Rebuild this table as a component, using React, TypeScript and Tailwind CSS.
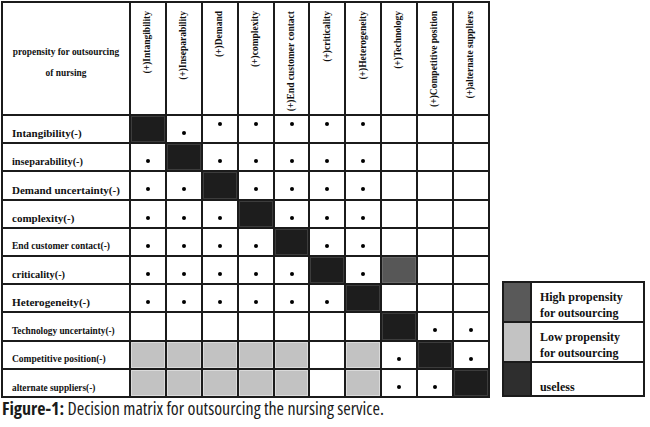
import React from 'react';

type Cell = 'black' | 'high' | 'low' | 'dot' | 'dotHigh' | '';

const columns = [
    '(+)Intangibility',
    '(+)Inseparability',
    '(+)Demand',
    '(+)complexity',
    '(+)End customer contact',
    '(+)criticality',
    '(+)Heterogeneity',
    '(+)Technology',
    '(+)Competitive position',
    '(+)alternate suppliers',
];

// label, label size, cells
const rows: { label: string; size: string; cells: Cell[] }[] = [
    { label: 'Intangibility(-)', size: 'text-[11px]', cells: ['black', 'dot', 'dotHigh', 'dotHigh', 'dotHigh', 'dotHigh', 'dotHigh', '', '', ''] },
    { label: 'inseparability(-)', size: 'text-[10.3px]', cells: ['dot', 'black', 'dot', 'dot', 'dot', 'dot', 'dot', '', '', ''] },
    { label: 'Demand uncertainty(-)', size: 'text-[11px]', cells: ['dot', 'dot', 'black', 'dot', 'dot', 'dot', 'dot', '', '', ''] },
    { label: 'complexity(-)', size: 'text-[11px]', cells: ['dot', 'dot', 'dot', 'black', 'dot', 'dot', 'dot', '', '', ''] },
    { label: 'End customer contact(-)', size: 'text-[9.5px]', cells: ['dot', 'dot', 'dot', 'dot', 'black', 'dot', 'dot', '', '', ''] },
    { label: 'criticality(-)', size: 'text-[10.4px]', cells: ['dot', 'dot', 'dot', 'dot', 'dot', 'black', 'dot', 'high', '', ''] },
    { label: 'Heterogeneity(-)', size: 'text-[11.2px]', cells: ['dot', 'dot', 'dot', 'dot', 'dot', 'dot', 'black', '', '', ''] },
    { label: 'Technology uncertainty(-)', size: 'text-[9.3px]', cells: ['', '', '', '', '', '', '', 'black', 'dot', 'dot'] },
    { label: 'Competitive position(-)', size: 'text-[9.5px]', cells: ['low', 'low', 'low', 'low', 'low', '', 'low', 'dot', 'black', 'dot'] },
    { label: 'alternate suppliers(-)', size: 'text-[9.3px]', cells: ['low', 'low', 'low', 'low', 'low', '', 'low', 'dot', 'dot', 'black'] },
];

const serif = 'font-[family-name:Liberation_Serif,Times_New_Roman,serif] font-bold text-[#111]';

const MatrixCell = ({ type }: { type: Cell }) => {
    const base = 'border-r-2 border-b-2 border-[#1b1b1b] flex justify-center';
    switch (type) {
        case 'black':
            return <div className={`${base} bg-[#1d1d1d] shadow-[inset_0_0_0_1px_#3c3c3c]`} />;
        case 'high':
            return <div className={`${base} bg-[#575757] shadow-[inset_0_0_0_1px_#6a6a6a]`} />;
        case 'low':
            return <div className={`${base} bg-[#c2c2c2] shadow-[inset_0_0_0_1px_#dadada]`} />;
        case 'dot':
            return (
                <div className={`${base} items-start pt-[15px]`}>
                    <span className="w-[4px] h-[4px] rounded-full bg-black" />
                </div>
            );
        case 'dotHigh':
            return (
                <div className={`${base} items-start pt-[6px]`}>
                    <span className="w-[4px] h-[4px] rounded-full bg-black" />
                </div>
            );
        default:
            return <div className={base} />;
    }
};

const Matrix = () => (
    <div className="ml-[1px] mt-[1px] border-l-2 border-t-2 border-[#1b1b1b] grid grid-cols-[128px_repeat(10,35.9px)] grid-rows-[113px_repeat(10,28.2px)]">
        {/* header corner */}
        <div className={`border-r-2 border-b-2 border-[#1b1b1b] flex flex-col items-center justify-center pt-[8px] text-[9.4px] leading-[21px] ${serif}`}>
            <span>propensity for outsourcing</span>
            <span>of nursing</span>
        </div>
        {columns.map((c) => (
            <div key={c} className="border-r-2 border-b-2 border-[#1b1b1b] flex justify-center items-start pt-[8px]">
                <span className={`[writing-mode:vertical-rl] rotate-180 text-[9.5px] leading-none whitespace-nowrap ${serif}`}>{c}</span>
            </div>
        ))}

        {rows.map((r) => (
            <React.Fragment key={r.label}>
                <div className={`border-r-2 border-b-2 border-[#1b1b1b] flex items-end pl-[9px] pb-[3px] leading-none whitespace-nowrap ${r.size} ${serif}`}>
                    {r.label}
                </div>
                {r.cells.map((cell, i) => (
                    <MatrixCell key={i} type={cell} />
                ))}
            </React.Fragment>
        ))}
    </div>
);

const Legend = () => (
    <div className="ml-[12px] mb-[1px] w-[143px] border-2 border-[#1b1b1b] grid grid-cols-[28px_1fr] grid-rows-[40px_40px_32px]">
        <div className="bg-[#595959] border-r-2 border-b-2 border-[#1b1b1b]" />
        <div className={`border-b-2 border-[#1b1b1b] pl-[8px] pt-[6px] text-[12px] leading-[16px] ${serif}`}>
            <div>High propensity</div>
            <div>for outsourcing</div>
        </div>
        <div className="bg-[#c3c3c3] border-r-2 border-b-2 border-[#1b1b1b]" />
        <div className={`border-b-2 border-[#1b1b1b] pl-[8px] pt-[6px] text-[12px] leading-[16px] ${serif}`}>
            <div>Low propensity</div>
            <div>for outsourcing</div>
        </div>
        <div className="bg-[#2e2e2e] border-r-2 border-[#1b1b1b]" />
        <div className={`flex items-end pl-[8px] pb-[2px] text-[12px] leading-none ${serif}`}>useless</div>
    </div>
);

export default function App() {
    return (
        <div className="w-[650px] h-[427px] bg-white overflow-hidden">
            <div className="flex items-end">
                <Matrix />
                <Legend />
            </div>
            <p className="pl-[2px] text-[18px] leading-[21px] text-[#1a1a1a] font-[family-name:Open_Sans,sans-serif] font-stretch-[75%] whitespace-nowrap">
                <span className="font-bold">Figure-1:</span> Decision matrix for outsourcing the nursing service.
            </p>
        </div>
    );
}
